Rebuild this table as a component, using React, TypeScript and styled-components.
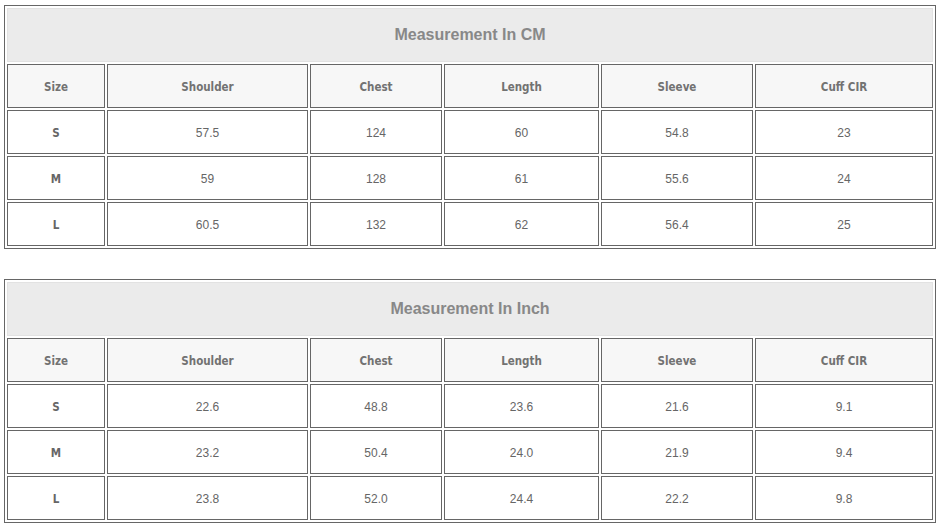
import React from "react";
import styled, { createGlobalStyle } from "styled-components";

const Global = createGlobalStyle`
  html, body { margin: 0; padding: 0; background: #ffffff; }
  body { font-family: "Liberation Sans", Arial, sans-serif; }
`;

const Page = styled.div`
  padding: 5px 5px 0 4px;
  display: flex;
  flex-direction: column;
  gap: 30px;
`;

const Table = styled.table`
  width: 931px;
  border: 1px solid #666666;
  border-collapse: separate;
  border-spacing: 2px;
  table-layout: fixed;
`;

const TitleCell = styled.th`
  height: 52px;
  padding: 0;
  border: 1px solid #e2e2e2;
  background: #ebebeb;
  color: #888888;
  font-size: 16px;
  font-weight: bold;
  text-align: center;
  vertical-align: middle;
`;

const HeadCell = styled.th`
  height: 41px;
  padding: 1px 0 0;
  border: 1px solid #666666;
  background: #f7f7f7;
  color: #727272;
  font-family: "DejaVu Sans Condensed", "DejaVu Sans", sans-serif;
  font-stretch: condensed;
  font-size: 11.5px;
  font-weight: bold;
  text-align: center;
  vertical-align: middle;
`;

const Cell = styled.td<{ $strong?: boolean }>`
  height: 41px;
  padding: 1px 0 0;
  border: 1px solid #666666;
  background: #ffffff;
  color: #666666;
  font-family: ${(p) =>
    p.$strong
      ? `"DejaVu Sans Condensed", "DejaVu Sans", sans-serif`
      : `"Liberation Sans", Arial, sans-serif`};
  font-stretch: ${(p) => (p.$strong ? "condensed" : "normal")};
  font-size: ${(p) => (p.$strong ? "11.5px" : "12px")};
  font-weight: ${(p) => (p.$strong ? "bold" : "normal")};
  text-align: center;
  vertical-align: middle;
`;

const widths = [96, 199, 130, 153, 150, 176];
const headers = ["Size", "Shoulder", "Chest", "Length", "Sleeve", "Cuff CIR"];

type Row = [string, string, string, string, string, string];

const cm: Row[] = [
  ["S", "57.5", "124", "60", "54.8", "23"],
  ["M", "59", "128", "61", "55.6", "24"],
  ["L", "60.5", "132", "62", "56.4", "25"],
];

const inch: Row[] = [
  ["S", "22.6", "48.8", "23.6", "21.6", "9.1"],
  ["M", "23.2", "50.4", "24.0", "21.9", "9.4"],
  ["L", "23.8", "52.0", "24.4", "22.2", "9.8"],
];

function SizeTable({ title, rows }: { title: string; rows: Row[] }) {
  return (
    <Table>
      <colgroup>
        {widths.map((w, i) => (
          <col key={i} style={{ width: w + 2 }} />
        ))}
      </colgroup>
      <thead>
        <tr>
          <TitleCell colSpan={6}>{title}</TitleCell>
        </tr>
        <tr>
          {headers.map((h) => (
            <HeadCell key={h}>{h}</HeadCell>
          ))}
        </tr>
      </thead>
      <tbody>
        {rows.map((r) => (
          <tr key={r[0]}>
            {r.map((v, i) => (
              <Cell key={i} $strong={i === 0}>
                {v}
              </Cell>
            ))}
          </tr>
        ))}
      </tbody>
    </Table>
  );
}

export default function App() {
  return (
    <>
      <Global />
      <Page>
        <SizeTable title="Measurement In CM" rows={cm} />
        <SizeTable title="Measurement In Inch" rows={inch} />
      </Page>
    </>
  );
}
